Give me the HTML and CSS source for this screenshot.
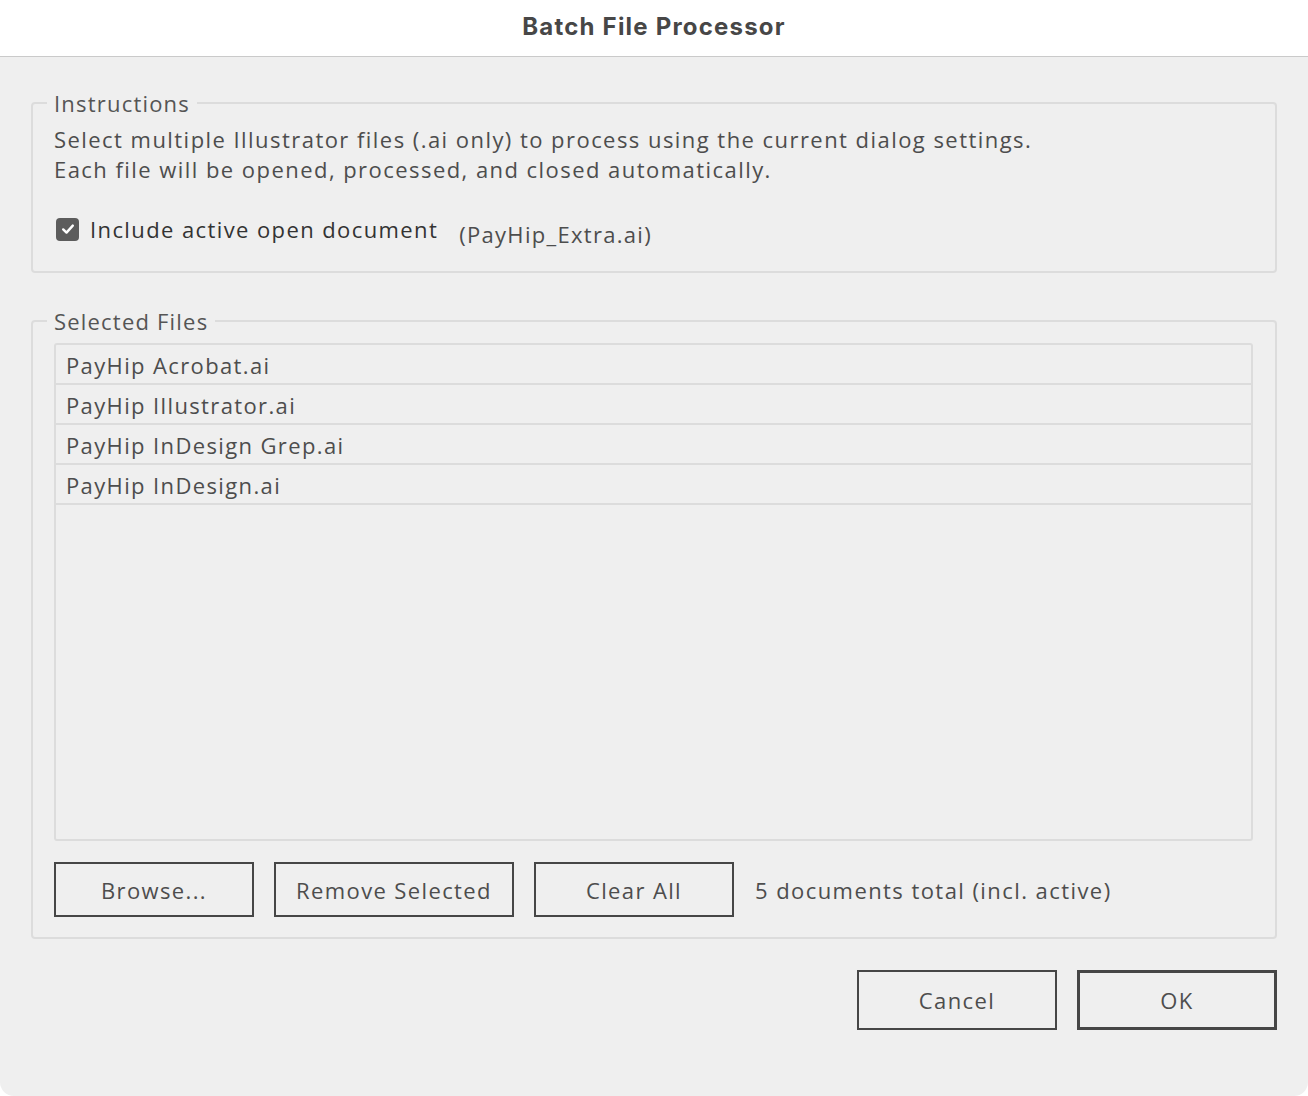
FILE: index.html
```html
<!DOCTYPE html>
<html lang="en">
<head>
<meta charset="utf-8">
<title>Batch File Processor</title>
<link rel="stylesheet" href="styles.css">
</head>
<body>
<div class="window">
  <header class="titlebar">Batch File Processor</header>
  <main class="content">
    <fieldset class="group group-instructions">
      <legend class="legend">Instructions</legend>
      <p class="desc">Select multiple Illustrator files (.ai only) to process using the current dialog settings.<br>Each file will be opened, processed, and closed automatically.</p>
      <div class="check-row">
        <span class="checkbox">
          <svg width="16" height="16" viewBox="0 0 16 16"><path d="M3.2 8.4 L6.5 11.6 L12.8 4.6" fill="none" stroke="#fff" stroke-width="2.4" stroke-linecap="round" stroke-linejoin="round"/></svg>
        </span>
        <span class="check-label">Include active open document</span>
        <span class="active-name">(PayHip_Extra.ai)</span>
      </div>
    </fieldset>

    <fieldset class="group group-files">
      <legend class="legend">Selected Files</legend>
      <ul class="file-list">
        <li class="file-row">PayHip Acrobat.ai</li>
        <li class="file-row">PayHip Illustrator.ai</li>
        <li class="file-row">PayHip InDesign Grep.ai</li>
        <li class="file-row">PayHip InDesign.ai</li>
      </ul>
      <div class="file-actions">
        <button class="btn btn-w200">Browse...</button>
        <button class="btn btn-w240">Remove Selected</button>
        <button class="btn btn-w200">Clear All</button>
        <span class="status">5 documents total (incl. active)</span>
      </div>
    </fieldset>

    <div class="dialog-actions">
      <button class="btn btn-dialog">Cancel</button>
      <button class="btn btn-dialog btn-default">OK</button>
    </div>
  </main>
</div>
</body>
</html>
```

FILE: styles.css
```css
* { box-sizing: border-box; }

html, body {
  margin: 0;
  padding: 0;
  background: #ffffff;
}

body {
  font-family: "Open Sans", "Liberation Sans", sans-serif;
  color: #4d4d4d;
}

.window {
  width: 1308px;
  height: 1096px;
  background: #efefef;
  border-radius: 0 0 14px 14px;
  overflow: hidden;
}

.titlebar {
  height: 57px;
  background: #ffffff;
  border-bottom: 1px solid #cacaca;
  text-align: center;
  font-family: "Inter", "Liberation Sans", sans-serif;
  font-weight: 700;
  font-size: 24px;
  letter-spacing: 1.2px;
  line-height: 54px;
  color: #474747;
}

.content {
  padding: 33px 31px 0 31px;
}

.group {
  margin: 0;
  border: 2px solid #dcdcdc;
  border-radius: 4px;
  padding: 0 22px 0 21px;
}

.legend {
  padding: 0 7px;
  margin-left: -7px;
  font-size: 22px;
  letter-spacing: 1.2px;
  line-height: 26px;
  color: #555555;
}

.desc {
  margin: 8px 0 0 0;
  font-size: 22px;
  letter-spacing: 1.45px;
  line-height: 30px;
  color: #4d4d4d;
}

.check-row {
  display: flex;
  align-items: center;
  height: 30px;
  margin-top: 30px;
  margin-bottom: 27px;
}

.checkbox {
  width: 23px;
  height: 23px;
  margin-left: 2px;
  border-radius: 4px;
  background: #5c5c5c;
  display: flex;
  align-items: center;
  justify-content: center;
}

.check-label {
  margin-left: 11px;
  font-size: 22px;
  letter-spacing: 1.4px;
  color: #333333;
}

.active-name {
  margin-left: 21px;
  margin-top: 9px;
  font-size: 22px;
  letter-spacing: 1.3px;
  color: #4d4d4d;
}

.group-files {
  margin-top: 35px;
}

.file-list {
  list-style: none;
  margin: 9px 0 0 0;
  padding: 0;
  height: 498px;
  border: 2px solid #dcdcdc;
  border-radius: 3px;
}

.file-row {
  height: 40px;
  line-height: 40px;
  padding-left: 10px;
  border-bottom: 2px solid #dcdcdc;
  font-size: 22px;
  letter-spacing: 1.37px;
  color: #4d4d4d;
}

.file-actions {
  display: flex;
  align-items: center;
  gap: 20px;
  margin-top: 21px;
  margin-bottom: 20px;
}

.btn {
  font-family: "Open Sans", "Liberation Sans", sans-serif;
  font-size: 22px;
  letter-spacing: 1.38px;
  color: #4d4d4d;
  background: #efefef;
  border: 2px solid #464646;
  border-radius: 0;
  padding: 0;
  margin: 0;
}

.btn-w200 { width: 200px; height: 55px; }
.btn-w240 { width: 240px; height: 55px; }

.status {
  margin-left: 1px;
  font-size: 22px;
  letter-spacing: 1.43px;
  color: #4d4d4d;
}

.dialog-actions {
  display: flex;
  justify-content: flex-end;
  gap: 20px;
  margin-top: 31px;
}

.btn-dialog {
  width: 200px;
  height: 60px;
}

.btn-default {
  border-width: 3px;
}
```
